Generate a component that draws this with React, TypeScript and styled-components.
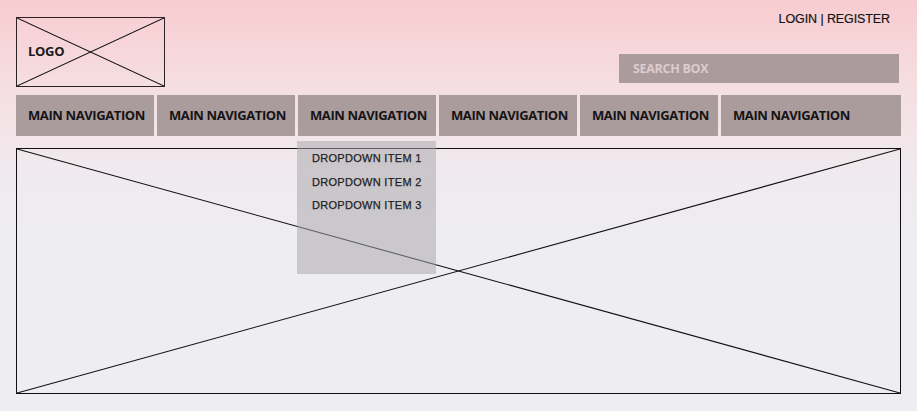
import React from "react"
import styled, { createGlobalStyle } from "styled-components"

const GlobalStyle = createGlobalStyle`
  html, body {
    margin: 0;
    padding: 0;
  }
  body {
    min-height: 411px;
    background: linear-gradient(180deg, #f8ccd0 0%, #f5dfe2 90px, #f0eaee 170px, #eeedf1 240px, #eeedf1 100%);
    font-family: "Liberation Sans", Arial, sans-serif;
  }
`

const Page = styled.div`
  width: 917px;
  height: 411px;
  box-sizing: border-box;
  padding: 0 16px;
  display: flex;
  flex-direction: column;
`

const Header = styled.header`
  display: flex;
  justify-content: space-between;
  align-items: flex-start;
  padding-top: 17px;
`

const Crossed = styled.div`
  position: relative;
  box-sizing: border-box;
  border: 1px solid #2a2224;
  svg {
    position: absolute;
    inset: 0;
    width: 100%;
    height: 100%;
  }
`

const LogoBox = styled(Crossed)`
  width: 149px;
  height: 70px;
  display: flex;
  align-items: center;
  padding-left: 11px;
`

const LogoText = styled.span`
  position: relative;
  font-family: "Open Sans", sans-serif;
  font-weight: 700;
  font-size: 13px;
  letter-spacing: -0.3px;
  color: #1a1a1a;
  margin-top: -2px;
`

const HeaderRight = styled.div`
  display: flex;
  flex-direction: column;
  align-items: flex-end;
  margin-top: -5px;
`

const AccountLinks = styled.div`
  font-size: 12.5px;
  color: #151515;
  letter-spacing: -0.1px;
  padding-right: 11px;
  -webkit-text-stroke: 0.2px #151515;
`

const SearchBox = styled.div`
  margin-top: 28px;
  margin-right: 2px;
  width: 280px;
  height: 29px;
  box-sizing: border-box;
  background: #ab9b9c;
  padding-left: 14px;
  display: flex;
  align-items: center;
  font-family: "Open Sans", sans-serif;
  font-weight: 700;
  font-size: 12.5px;
  letter-spacing: -0.3px;
  color: #dccdcf;
`

const Nav = styled.nav`
  margin-top: 8px;
  display: flex;
  gap: 3px;
  height: 41px;
`

const NavItem = styled.div<{ $grow?: boolean }>`
  position: relative;
  flex: ${(p) => (p.$grow ? "1" : "0 0 138px")};
  background: #aa9c9d;
  display: flex;
  align-items: center;
  padding: 0 0 2px 12px;
  box-sizing: border-box;
  font-family: "Open Sans", sans-serif;
  font-weight: 700;
  font-size: 13px;
  letter-spacing: -0.4px;
  color: #161314;
`

const Dropdown = styled.div`
  position: absolute;
  z-index: 2;
  top: 46px;
  left: -1px;
  width: 139px;
  height: 133px;
  background: rgba(168, 166, 170, 0.52);
  padding-top: 9px;
  box-sizing: border-box;
`

const DropdownItem = styled.div`
  height: 23.5px;
  line-height: 16px;
  padding-left: 15px;
  font-family: "Liberation Sans", Arial, sans-serif;
  font-weight: 400;
  font-size: 11px;
  letter-spacing: 0.3px;
  color: #1e1e1e;
  -webkit-text-stroke: 0.25px #1e1e1e;
`

const Hero = styled(Crossed)`
  margin-top: 12px;
  height: 246px;
  border-color: #111;
`

const Cross = () => (
  <svg viewBox="0 0 100 100" preserveAspectRatio="none">
    <line x1="0" y1="0" x2="100" y2="100" stroke="#111" strokeWidth="1.1" vectorEffect="non-scaling-stroke" />
    <line x1="100" y1="0" x2="0" y2="100" stroke="#111" strokeWidth="1.1" vectorEffect="non-scaling-stroke" />
  </svg>
)

const navItems = [0, 1, 2, 3, 4, 5]

export default function App() {
  return (
    <>
      <GlobalStyle />
      <Page>
        <Header>
          <LogoBox>
            <Cross />
            <LogoText>LOGO</LogoText>
          </LogoBox>
          <HeaderRight>
            <AccountLinks>LOGIN | REGISTER</AccountLinks>
            <SearchBox>SEARCH BOX</SearchBox>
          </HeaderRight>
        </Header>
        <Nav>
          {navItems.map((i) => (
            <NavItem key={i} $grow={i === 5}>
              MAIN NAVIGATION
              {i === 2 && (
                <Dropdown>
                  <DropdownItem>DROPDOWN ITEM 1</DropdownItem>
                  <DropdownItem>DROPDOWN ITEM 2</DropdownItem>
                  <DropdownItem>DROPDOWN ITEM 3</DropdownItem>
                </Dropdown>
              )}
            </NavItem>
          ))}
        </Nav>
        <Hero>
          <Cross />
        </Hero>
      </Page>
    </>
  )
}
